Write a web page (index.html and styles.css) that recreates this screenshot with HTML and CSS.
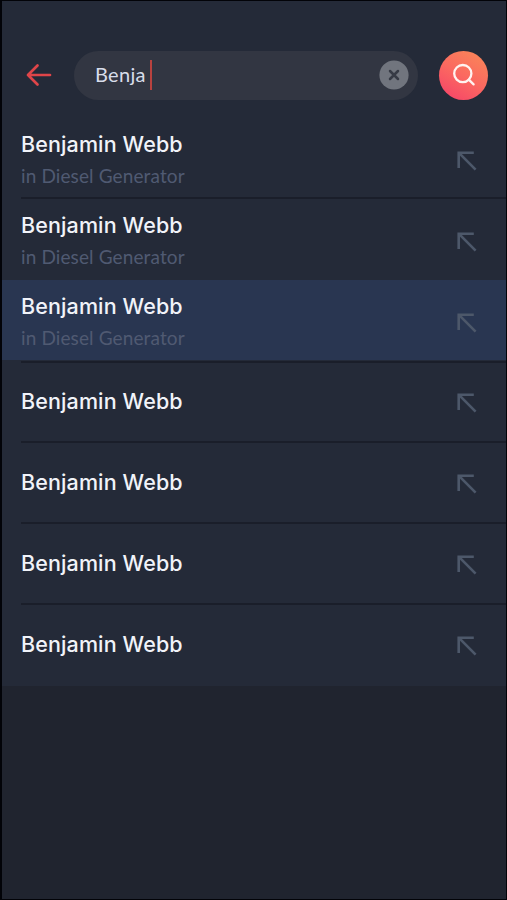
FILE: index.html
```html
<!DOCTYPE html>
<html lang="en">
<head>
<meta charset="utf-8">
<title>Search</title>
<link rel="stylesheet" href="styles.css">
</head>
<body>
<svg class="defs" aria-hidden="true">
  <symbol id="fill-arrow" viewBox="0 0 20 20"><path d="M1.7 17V1.7H16.8M1.7 1.7L18.6 18.6"/></symbol>
</svg>
<main class="screen">
  <header class="bar">
    <svg class="back" viewBox="0 0 26 24"><path d="M24 12H2M11.5 2.5L2 12L11.5 21.5"/></svg>
    <div class="field">
      <span class="query">Benja</span><span class="caret"></span>
      <svg class="clear" viewBox="0 0 30 30"><circle cx="15" cy="15" r="14.6"/><path d="M11 11L19 19M19 11L11 19"/></svg>
    </div>
    <div class="search"><svg viewBox="0 0 22 22"><circle cx="9.8" cy="9.6" r="8.6"/><path d="M15.8 15.6L20.6 20.4"/></svg></div>
  </header>
  <ul class="results">
    <li class="row"><div><p class="name">Benjamin Webb</p><p class="place">in Diesel Generator</p></div><svg class="fill"><use href="#fill-arrow"/></svg></li>
    <li class="row ruled"><div><p class="name">Benjamin Webb</p><p class="place">in Diesel Generator</p></div><svg class="fill"><use href="#fill-arrow"/></svg></li>
    <li class="row active"><div><p class="name">Benjamin Webb</p><p class="place">in Diesel Generator</p></div><svg class="fill"><use href="#fill-arrow"/></svg></li>
    <li class="row ruled after-active"><p class="name">Benjamin Webb</p><svg class="fill"><use href="#fill-arrow"/></svg></li>
    <li class="row ruled"><p class="name">Benjamin Webb</p><svg class="fill"><use href="#fill-arrow"/></svg></li>
    <li class="row ruled"><p class="name">Benjamin Webb</p><svg class="fill"><use href="#fill-arrow"/></svg></li>
    <li class="row ruled"><p class="name">Benjamin Webb</p><svg class="fill"><use href="#fill-arrow"/></svg></li>
  </ul>
</main>
</body>
</html>
```

FILE: styles.css
```css
* { box-sizing: border-box; margin: 0; padding: 0; }
body { background: #20242f; }
svg { fill: none; stroke-linecap: round; stroke-linejoin: round; flex: none; }
.defs { display: none; }
.screen {
  height: 900px;
  border: 1px solid #020308;
  border-left-width: 2px;
  background: #20242f;
  font-family: Lato, sans-serif;
  overflow: hidden;
}
.bar {
  display: flex;
  align-items: center;
  height: 116px;
  padding: 32px 18px 0 24px;
  background: #242a38;
}
.back { width: 26px; height: 24px; stroke: #df4549; stroke-width: 2.7; }
.field {
  display: flex;
  align-items: center;
  width: 344px;
  height: 49px;
  margin-left: 22px;
  padding: 0 9px 0 21px;
  border-radius: 25px;
  background: #323642;
}
.query { font-size: 20px; line-height: 28px; letter-spacing: 0.3px; padding-bottom: 2px; color: #d8ddea; }
.caret { width: 2px; height: 30px; margin-left: 4px; background: #b8423f; }
.clear { width: 30px; height: 30px; margin-left: auto; stroke: #363a45; stroke-width: 2.5; }
.clear circle { fill: #71757e; stroke: none; }
.search {
  display: flex;
  align-items: center;
  justify-content: center;
  width: 49px;
  height: 49px;
  margin-left: auto;
  border-radius: 50%;
  background: linear-gradient(30deg, #f64668 8%, #fb6960 50%, #f98758 95%);
}
.search svg { width: 22px; height: 22px; stroke: #fff3f0; stroke-width: 2.3; overflow: visible; }
.results { list-style: none; background: #242a38; height: 569px; }
.row {
  display: flex;
  align-items: center;
  justify-content: space-between;
  height: 81px;
  padding: 2px 29px 0 19px;
}
.ruled { background: linear-gradient(#1a1e2a, #1a1e2a) 19px 0 / 100% 2px no-repeat; }
.row:first-child { height: 80px; padding-top: 4px; }
.row.ruled:nth-child(2) { height: 83px; padding-top: 3px; }
.row.active { height: 80px; background: #293651; }
.row.after-active { background-position: 19px 1px; padding-top: 1px; }
.name {
  font-family: Inter, sans-serif;
  font-size: 21.5px;
  font-weight: 500;
  line-height: 30px;
  letter-spacing: 0.12px;
  margin-top: -1px;
  color: #f1f3f9;
}
.place { font-size: 19px; line-height: 24px; letter-spacing: 0.12px; margin-top: 5px; color: #505a72; }
.fill { width: 20px; height: 20px; margin-top: 3px; stroke: #4d586a; stroke-width: 2.6; stroke-linecap: butt; stroke-linejoin: miter; }
```
